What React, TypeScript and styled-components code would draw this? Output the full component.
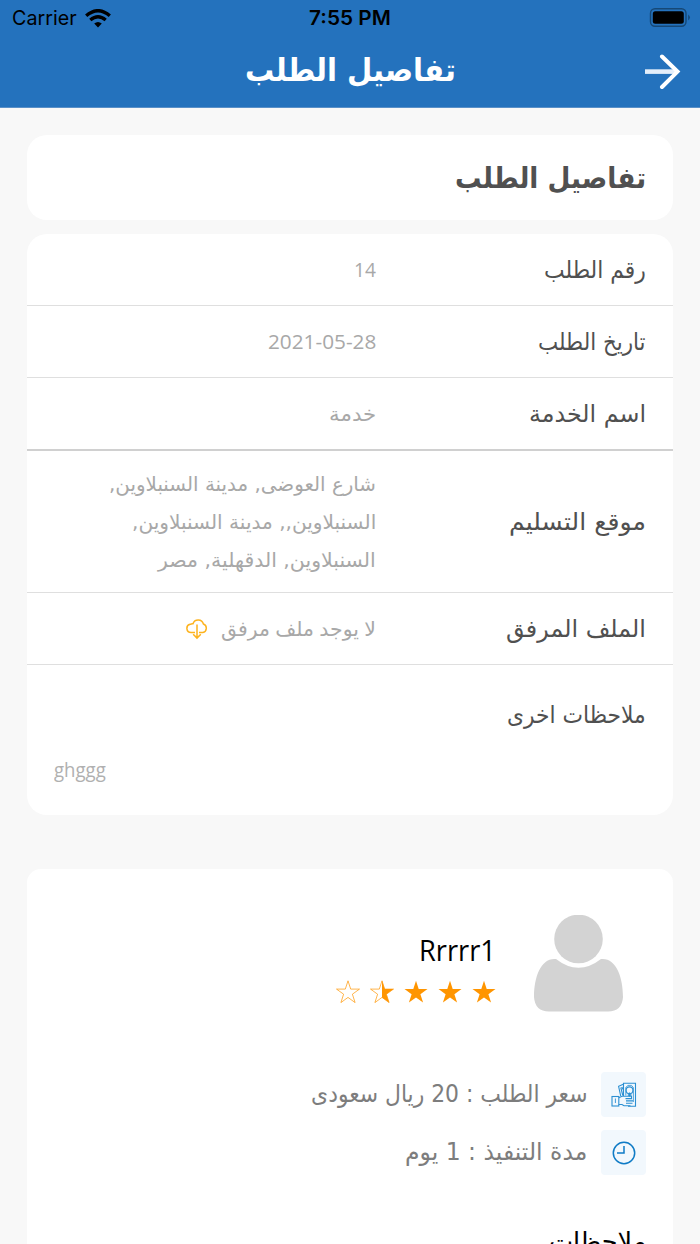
import React, { useLayoutEffect, useRef, useState } from "react";
import styled, { createGlobalStyle } from "styled-components";

const Global = createGlobalStyle`
  * { box-sizing: border-box; }
  html, body { margin: 0; background: #f8f8f8; }
  body { font-family: "DejaVu Sans", sans-serif; overflow: hidden; }
`;

const Screen = styled.div`
  width: 700px;
  height: 1244px;
  overflow: hidden;
  display: flex;
  flex-direction: column;
`;

const Header = styled.header`
  height: 108px;
  flex: none;
  background: #2472bd;
  border-bottom: 1px solid #5a90c8;
`;

const StatusBar = styled.div`
  height: 36px;
  display: grid;
  grid-template-columns: 1fr auto 1fr;
  align-items: center;
  padding: 0 9px 0 12px;
  font-family: Inter, sans-serif;
  font-size: 20px;
  line-height: 36px;
  color: #000;
`;

const Carrier = styled.div`
  display: flex;
  align-items: center;
  gap: 8px;
`;

const Clock = styled.div`
  font-weight: 600;
  font-size: 19.5px;
  margin-right: 4px;
`;

const BatteryHolder = styled.div`
  display: flex;
  justify-content: flex-end;
`;

const TitleBar = styled.div`
  height: 71px;
  display: grid;
  direction: rtl;
  grid-template-columns: 60px 1fr 60px;
  align-items: center;
`;

const BackButton = styled.button`
  border: 0;
  padding: 0 19px 0 0;
  background: none;
  display: flex;
`;

const PageTitle = styled.h1`
  margin: 0;
  padding-bottom: 4px;
  font-size: 32px;
  font-weight: 700;
  line-height: 60px;
  color: #fff;
  display: flex;
  justify-content: center;
`;

const Content = styled.main`
  direction: rtl;
  padding: 27px 27px 0;
  display: flex;
  flex-direction: column;
`;

const Card = styled.section<{ $radius?: number }>`
  background: #fff;
  border-radius: ${(p) => p.$radius ?? 20}px;
  flex: none;
`;

const HeadingCard = styled(Card)`
  height: 85px;
  padding: 0 27px;
  display: flex;
  align-items: center;
  margin-bottom: 14px;
`;

const Heading = styled.h2`
  margin: 0;
  font-size: 29px;
  line-height: 60px;
  color: #505050;
`;

const DetailsCard = styled(Card)`
  height: 581px;
  margin-bottom: 54px;
`;

const Row = styled.div<{ $height?: number; $strong?: boolean }>`
  height: ${(p) => p.$height ?? 72}px;
  padding: 0 27px;
  display: grid;
  grid-template-columns: 270px 1fr;
  align-items: center;
  border-bottom: ${(p) => (p.$strong ? "2px solid #d0d0d0" : "1px solid #dfdfdf")};
`;

const Label = styled.div`
  font-size: 24px;
  line-height: 38px;
  color: #505050;
`;

const Value = styled.div`
  display: flex;
  align-items: center;
  font-family: "Open Sans", "DejaVu Sans", sans-serif;
  font-size: 20px;
  line-height: 38px;
  color: #a8a8a8;
`;

const Lines = styled.div`
  display: flex;
  flex-direction: column;
  font-size: 20px;
  line-height: 38px;
  color: #a8a8a8;
`;

const CloudIcon = styled.svg`
  margin-right: 13px;
`;

const Notes = styled.div`
  padding: 31px 27px 0;
`;

const NoteText = styled.div`
  direction: ltr;
  display: flex;
  margin-top: 17px;
  font-family: "Open Sans", sans-serif;
  font-size: 20px;
  line-height: 38px;
  color: #b0b0b0;
`;

const OfferCard = styled(Card)`
  height: 500px;
  padding: 46px 27px 0;
`;

const Profile = styled.div`
  display: flex;
  height: 98px;
  padding-right: 23px;
`;

const ProfileText = styled.div`
  margin-right: 38px;
  padding-top: 13px;
`;

const Name = styled.div`
  font-family: "Open Sans", sans-serif;
  font-size: 29px;
  line-height: 44px;
  color: #000;
`;

const Stars = styled.div`
  display: flex;
  gap: 10px;
  margin-top: 8px;
`;

const Facts = styled.div`
  display: flex;
  flex-direction: column;
  gap: 13px;
  margin-top: 59px;
`;

const Fact = styled.div`
  display: flex;
  align-items: center;
  gap: 14px;
  height: 45px;
  font-size: 24px;
  line-height: 47px;
  color: #7d7d7d;
`;

const FactIcon = styled.div`
  width: 45px;
  height: 45px;
  border-radius: 4px;
  background: #f2f8fd;
  display: flex;
  align-items: center;
  justify-content: center;
`;

const NotesHeading = styled.h3`
  margin: 45px 0 0;
  font-size: 25px;
  font-weight: 400;
  line-height: 44px;
  color: #000;
`;

const FitBox = styled.span<{ $width: number }>`
  display: block;
  width: ${(p) => p.$width}px;
  white-space: nowrap;
`;

const FitInner = styled.span<{ $ltr?: boolean }>`
  display: inline-block;
  transform-origin: ${(p) => (p.$ltr ? "left" : "right")} center;
`;

/* Sets a run of text to a given line width. */
function Fit({ width, ltr, children }: { width: number; ltr?: boolean; children: React.ReactNode }) {
  const ref = useRef<HTMLSpanElement>(null);
  const [scale, setScale] = useState(1);
  useLayoutEffect(() => {
    if (ref.current) setScale(width / ref.current.offsetWidth);
  }, [width]);
  return (
    <FitBox $width={width} dir={ltr ? "ltr" : "rtl"}>
      <FitInner ref={ref} $ltr={ltr} style={{ transform: `scaleX(${scale})` }}>
        {children}
      </FitInner>
    </FitBox>
  );
}

const STAR = "M12 0.8 L14.7 9.1 L23.5 9.1 L16.4 14.2 L19.1 22.6 L12 17.4 L4.9 22.6 L7.6 14.2 L0.5 9.1 L9.3 9.1 Z";

function Star({ fill }: { fill: "full" | "half" | "none" }) {
  return (
    <svg width="24" height="23" viewBox="0 0 24 23">
      {fill !== "full" && <path d={STAR} fill="none" stroke="#ff9500" strokeWidth="0.7" />}
      {fill === "full" && <path d={STAR} fill="#ff9500" />}
      {fill === "half" && (
        <path d="M12 0.8 L14.7 9.1 L23.5 9.1 L16.4 14.2 L19.1 22.6 L12 17.4 Z" fill="#ff9500" />
      )}
    </svg>
  );
}

function MoneyIcon() {
  return (
    <svg width="26" height="26" viewBox="0 0 26 26" fill="none" stroke="#2b8fd2" strokeWidth="1.1">
      <path d="M12.5 14 V1.2 H24.5 V24.3 H17" />
      <path d="M14.8 13.500 V5.500 L16.800 3.400 H20.500 L22.400 5.500 V20" strokeWidth="0.8" />
      <circle cx="18.500" cy="8.300" r="3.400" />
      <path d="M18.500 10.500 V14.500 M16.800 13 H20.500" strokeWidth="1.3" />
      <path d="M12.300 2.200 L7.600 4.300 L9.700 14 M9.800 5.500 L11.800 13.500 M10.800 5 L12.500 8" />
      <rect x="1" y="14.500" width="6.800" height="9.500" />
      <path d="M4.400 16.500 V21" strokeWidth="0.9" />
      <path d="M7.800 15.800 L11 14.300 H20.500 V16.600 H14.500 M15 18.900 H22 M15 21.200 H21.500 M7.800 22.500 H11 L13 23.700 H19.500" />
    </svg>
  );
}

export default function App() {
  return (
    <Screen>
      <Global />
      <Header>
        <StatusBar>
          <Carrier>
            <Fit width={65} ltr>Carrier</Fit>
            <svg width="26" height="19" viewBox="0 0 26 19">
              <path d="M1.2 6.8 Q13 -3.4 24.8 6.8" fill="none" stroke="#000" strokeWidth="3.4" />
              <path d="M5.3 11 Q13 4.4 20.7 11" fill="none" stroke="#000" strokeWidth="3.3" />
              <path d="M9.2 14.6 Q13 11.4 16.8 14.6 L13 18.4 Z" />
            </svg>
          </Carrier>
          <Clock>
            <Fit width={82} ltr>7:55 PM</Fit>
          </Clock>
          <BatteryHolder>
            <svg width="42" height="20" viewBox="0 0 42 20">
              <rect x="1.500" y="0.800" width="35.500" height="17.400" rx="4.500" fill="none" stroke="#164876" strokeWidth="1.4" />
              <rect x="3.800" y="3.200" width="31" height="12.600" rx="2.5" />
              <path d="M39.200 6.500 Q42.600 9.500 39.200 12.500 Z" fill="#164876" />
            </svg>
          </BatteryHolder>
        </StatusBar>
        <TitleBar>
          <BackButton aria-label="رجوع">
            <svg width="37" height="36" viewBox="0 0 37 36" fill="none" stroke="#fff" strokeWidth="4">
              <path d="M1 17.600 H33" strokeWidth="4.6" stroke="#e4eefa" />
              <path d="M18 2.5 L33.500 17.600 L18 33" strokeLinecap="round" />
            </svg>
          </BackButton>
          <PageTitle>
            <Fit width={211}>تفاصيل الطلب</Fit>
          </PageTitle>
        </TitleBar>
      </Header>

      <Content>
        <HeadingCard>
          <Heading>
            <Fit width={191}>تفاصيل الطلب</Fit>
          </Heading>
        </HeadingCard>

        <DetailsCard>
          <Row>
            <Label><Fit width={102}>رقم الطلب</Fit></Label>
            <Value><Fit width={22}>14</Fit></Value>
          </Row>
          <Row>
            <Label><Fit width={108}>تاريخ الطلب</Fit></Label>
            <Value><Fit width={108}>2021-05-28</Fit></Value>
          </Row>
          <Row $height={73} $strong>
            <Label><Fit width={117}>اسم الخدمة</Fit></Label>
            <Value><Fit width={47}>خدمة</Fit></Value>
          </Row>
          <Row $height={142}>
            <Label><Fit width={137}>موقع التسليم</Fit></Label>
            <Lines>
              <Fit width={267}>شارع العوضى, مدينة السنبلاوين,</Fit>
              <Fit width={244}>السنبلاوين,, مدينة السنبلاوين,</Fit>
              <Fit width={218}>السنبلاوين, الدقهلية, مصر</Fit>
            </Lines>
          </Row>
          <Row>
            <Label><Fit width={140}>الملف المرفق</Fit></Label>
            <Value>
              <Fit width={155}>لا يوجد ملف مرفق</Fit>
              <CloudIcon width="22" height="22" viewBox="0 0 22 22" fill="none" stroke="#fdb31f" strokeWidth="1.5">
                <path d="M9 14.6 H5.2 A4.2 4.2 0 0 1 4.2 6.300 Q5.500 5.500 7 5.700 A5.400 5.400 0 0 1 17.400 6 A4.500 4.500 0 0 1 16.800 14.6 H13" />
                <path d="M11 6.500 V20 M7.2 16.2 L11 20.1 L14.8 16.2" />
              </CloudIcon>
            </Value>
          </Row>
          <Notes>
            <Label><Fit width={139}>ملاحظات اخرى</Fit></Label>
            <NoteText><Fit width={52} ltr>ghggg</Fit></NoteText>
          </Notes>
        </DetailsCard>

        <OfferCard $radius={14}>
          <Profile>
            <svg width="89" height="98" viewBox="0 0 89 98" fill="#d3d3d3">
              <circle cx="44.5" cy="24" r="24.3" />
              <path d="M22 44 Q44.5 61.5 67 44 C82 42.5 89 62 89 82 Q88 96.5 74 96.5 H15 Q1 96.5 0 82 C0 62 7 42.5 22 44 Z" />
            </svg>
            <ProfileText>
              <Name><Fit width={77}>Rrrrr1</Fit></Name>
              <Stars>
                <Star fill="full" />
                <Star fill="full" />
                <Star fill="full" />
                <Star fill="half" />
                <Star fill="none" />
              </Stars>
            </ProfileText>
          </Profile>
          <Facts>
            <Fact>
              <FactIcon>
                <MoneyIcon />
              </FactIcon>
              <Fit width={276}>سعر الطلب : 20 ريال سعودى</Fit>
            </Fact>
            <Fact>
              <FactIcon>
                <svg width="24" height="24" viewBox="0 0 24 24" fill="none" stroke="#0f7bc6" strokeWidth="1.5">
                  <circle cx="12" cy="12" r="10.7" />
                  <path d="M12 5 V12 H5" />
                </svg>
              </FactIcon>
              <Fit width={182}>مدة التنفيذ : 1 يوم</Fit>
            </Fact>
          </Facts>
          <NotesHeading><Fit width={97}>ملاحظات</Fit></NotesHeading>
        </OfferCard>
      </Content>
    </Screen>
  );
}
